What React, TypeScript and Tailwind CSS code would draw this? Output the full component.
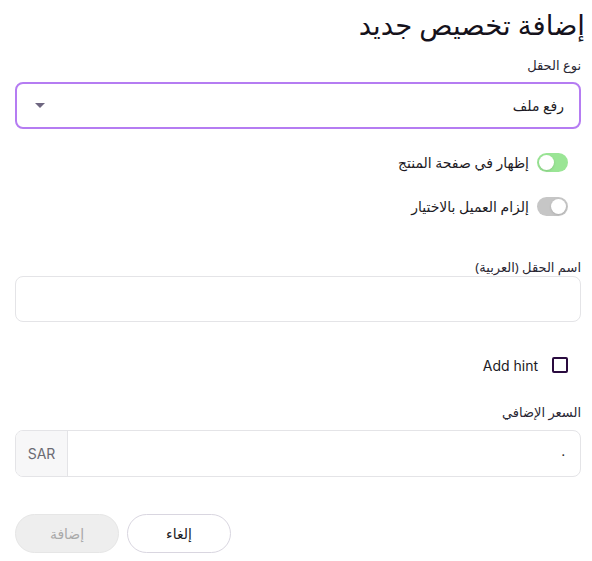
import React, { useState } from 'react';

const Toggle: React.FC<{ on: boolean; onChange: () => void }> = ({ on, onChange }) => (
  <button
    type="button"
    onClick={onChange}
    className={`relative w-[31px] h-[19px] rounded-full shrink-0 flex items-center px-[2px] ${
      on ? 'bg-[#9ae595] justify-end' : 'bg-[#c6c6c6] justify-start'
    }`}
  >
    <span className="block w-[15px] h-[15px] rounded-full bg-white shadow-sm" />
  </button>
);

const App: React.FC = () => {
  const [showOnPage, setShowOnPage] = useState(true);
  const [required, setRequired] = useState(false);
  const [hint, setHint] = useState(false);

  return (
    <div
      dir="rtl"
      className="w-[592px] h-[561px] bg-white pr-[11px] pl-[15px] pt-2 text-[#1f1f2b] flex flex-col"
      style={{ fontFamily: '"Noto Sans", "DejaVu Sans", sans-serif' }}
    >
      {/* Header */}
      <h1 className="h-[34px] text-[27.5px] leading-[34px] font-normal text-[#15121c] -mr-[4px]">
        إضافة تخصيص جديد
      </h1>

      {/* Field type */}
      <label className="mt-[13px] h-[20px] text-[13px] leading-[20px] text-[#2a2733]">نوع الحقل</label>
      <div className="mt-[7px] h-[47px] rounded-[8px] border-2 border-[#b57cf2] flex items-center justify-between pr-[15px] pl-[18px]">
        <span className="text-[14px] text-[#1c1a24]">رفع ملف</span>
        <svg width="10" height="6" viewBox="0 0 10 6">
          <path d="M0 0h10L5 5z" fill="#6e6680" />
        </svg>
      </div>

      {/* Toggles */}
      <div className="mt-[23px] h-[20px] flex items-center gap-[8px] pr-[13px]">
        <Toggle on={showOnPage} onChange={() => setShowOnPage(!showOnPage)} />
        <span className="text-[14px] text-[#1c1a24]">إظهار في صفحة المنتج</span>
      </div>
      <div className="mt-[24px] h-[20px] flex items-center gap-[8px] pr-[13px]">
        <Toggle on={required} onChange={() => setRequired(!required)} />
        <span className="text-[14px] text-[#1c1a24]">إلزام العميل بالاختيار</span>
      </div>

      {/* Field name */}
      <label className="mt-[42px] h-[18px] text-[13px] leading-[18px] text-[#2a2733]">اسم الحقل (العربية)</label>
      <input
        className="h-[46px] rounded-[8px] border border-[#e4e4e7] px-3 text-[14px] outline-none"
        type="text"
      />

      {/* Hint */}
      <div className="mt-[33px] h-[20px] flex items-center gap-[14px] pr-[13px]">
        <button
          type="button"
          onClick={() => setHint(!hint)}
          className="w-[16px] h-[16px] border-2 border-[#2a0b3f] rounded-[2px] shrink-0 bg-white"
        />
        <span className="text-[14px] text-[#1c1a24]" style={{ fontFamily: 'Inter, "Noto Sans", sans-serif' }}>
          Add hint
        </span>
      </div>

      {/* Extra price */}
      <label className="mt-[28px] h-[18px] text-[13px] leading-[18px] text-[#2a2733]">السعر الإضافي</label>
      <div className="mt-[9px] h-[47px] rounded-[8px] border border-[#e4e4e7] flex overflow-hidden">
        <div className="flex-1 flex items-center pr-[13px] text-[14px] text-[#333]">٠</div>
        <div
          className="w-[52px] bg-[#f7f7f8] border-r border-[#e4e4e7] flex items-center justify-center text-[14px] text-[#6b6b73]"
          style={{ fontFamily: 'Inter, "Noto Sans", sans-serif' }}
        >
          SAR
        </div>
      </div>

      {/* Actions */}
      <div className="mt-[37px] flex justify-end gap-[8px]">
        <button
          type="button"
          className="w-[104px] h-[39px] rounded-full border border-[#d9d6e0] bg-white text-[14px] font-medium text-[#1c1a24]"
        >
          إلغاء
        </button>
        <button
          type="button"
          disabled
          className="w-[104px] h-[39px] rounded-full border border-[#e6e6e6] bg-[#eeeeee] text-[14px] font-medium text-[#a9a9a9]"
        >
          إضافة
        </button>
      </div>
    </div>
  );
};

export default App;
